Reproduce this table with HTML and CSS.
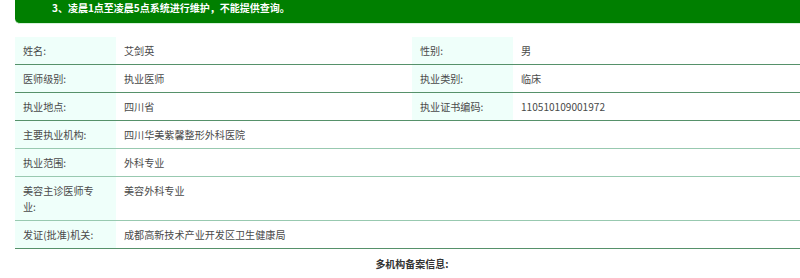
FILE: index.html
```html
<!DOCTYPE html>
<html lang="zh">
<head>
<meta charset="utf-8">
<link rel="stylesheet" href="styles.css">
</head>
<body>
<div class="page">
  <div class="notice">3、凌晨1点至凌晨5点系统进行维护，不能提供查询。</div>
  <table class="info">
    <colgroup>
      <col class="c-label"><col class="c-value"><col class="c-label"><col class="c-value2">
    </colgroup>
    <tr class="dark">
      <td class="label">姓名:</td><td class="value">艾剑英</td>
      <td class="label">性别:</td><td class="value">男</td>
    </tr>
    <tr class="dark">
      <td class="label">医师级别:</td><td class="value">执业医师</td>
      <td class="label">执业类别:</td><td class="value">临床</td>
    </tr>
    <tr class="dark">
      <td class="label">执业地点:</td><td class="value">四川省</td>
      <td class="label">执业证书编码:</td><td class="value">110510109001972</td>
    </tr>
    <tr class="light">
      <td class="label">主要执业机构:</td><td class="value" colspan="3">四川华美紫馨整形外科医院</td>
    </tr>
    <tr class="light">
      <td class="label">执业范围:</td><td class="value" colspan="3">外科专业</td>
    </tr>
    <tr class="light">
      <td class="label">美容主诊医师专业:</td><td class="value" colspan="3">美容外科专业</td>
    </tr>
    <tr class="dark">
      <td class="label">发证(批准)机关:</td><td class="value" colspan="3">成都高新技术产业开发区卫生健康局</td>
    </tr>
  </table>
  <div class="subtitle">多机构备案信息:</div>
</div>
</body>
</html>
```

FILE: styles.css
```css
html, body {
  margin: 0;
  padding: 0;
  overflow: hidden;
  background: #fff;
}
body {
  font-family: "Noto Sans CJK SC", "Noto Sans", sans-serif;
  font-size: 10px;
  color: #4a4a4a;
}
.page {
  padding-left: 15px;
  width: 794px;
}
.notice {
  background: #007f00;
  color: #fff;
  font-weight: bold;
  font-size: 10px;
  line-height: 16px;
  height: 16px;
  padding: 0 0 7px 37px;
  border-radius: 0 0 0 5px;
  border-bottom: 1px solid #d6f2dc;
  width: 800px;
}
.info {
  margin-top: 13px;
  width: 794px;
  table-layout: fixed;
  border-collapse: collapse;
}
.c-label { width: 101px; }
.c-value { width: 296px; }
.c-value2 { width: 296px; }
.info td {
  padding: 5.5px 8px;
  line-height: 16px;
  vertical-align: top;
  font-size: 10.1px;
}
.info .label {
  background: #effffa;
  padding-right: 11px;
}
.info tr.dark td {
  border-bottom: 1px solid #56916a;
}
.info tr.light td {
  border-bottom: 1px solid #98c9b0;
}
.subtitle {
  margin-top: 7px;
  text-align: center;
  font-weight: bold;
  color: #333;
  line-height: 16px;
  font-size: 10px;
}
```
